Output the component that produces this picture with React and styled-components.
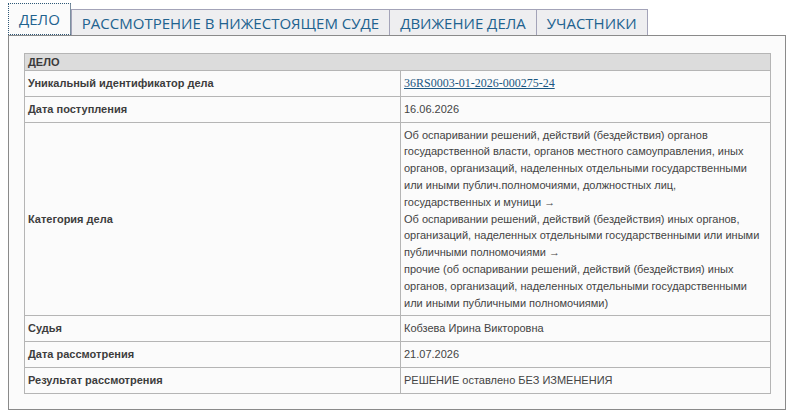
import styled, { createGlobalStyle } from "styled-components";

const GlobalStyle = createGlobalStyle`
  html, body {
    margin: 0;
    padding: 0;
    background: #ffffff;
  }
`;

const Page = styled.div`
  padding: 3px 2px 6px 8px;
`;

const TabBar = styled.ul`
  display: flex;
  align-items: flex-end;
  list-style: none;
  margin: 0;
  padding: 0;
`;

const Tab = styled.li`
  box-sizing: border-box;
  margin-right: ${(p) => (p.$active ? "1px" : "0")};
  margin-left: ${(p) => (p.$active ? "0" : "-1px")};
  padding: ${(p) => (p.$active ? "5px 10px 5px" : "3px 10px 2px")};
  background: ${(p) => (p.$active ? "#fbfbfb" : "#eeeef0")};
  border: 1px solid #a3a3b8;
  border-bottom: none;
  ${(p) => p.$active && "border: 1px dotted #2f5877; border-right-style: solid; border-right-color: #7c8fa0;"}
  font-family: "Open Sans", "Noto Sans", sans-serif;
  font-size: 15px;
  line-height: 20px;
  color: #21628f;
  text-transform: uppercase;
  white-space: nowrap;
  cursor: pointer;

  &:first-child {
    margin-left: 0;
  }
`;

const Panel = styled.div`
  border: 1px solid #8a8a8a;
  background: #fbfbfb;
  padding: 17px 14px 15px 15px;
`;

const Table = styled.table`
  width: 100%;
  border-collapse: collapse;
  font-family: "Liberation Sans", Arial, sans-serif;
  font-size: 11px;
  color: #444;
`;

const HeadCell = styled.th`
  background: #dcdcdc;
  border: 1px solid #b5b5b5;
  text-align: left;
  font-weight: bold;
  color: #3a3a3a;
  padding: 1px 3px;
  line-height: 14px;
`;

const Label = styled.td`
  width: 369px;
  border: 1px solid #b5b5b5;
  padding: 4px 3px;
  line-height: 16.8px;
  font-weight: bold;
  color: #3d3d3d;
  vertical-align: middle;
`;

const Value = styled.td`
  border: 1px solid #b5b5b5;
  padding: 4px 10px 4px 3px;
  line-height: 16.8px;
  color: #444;
`;

const CaseLink = styled.a`
  font-family: "Liberation Serif", "Times New Roman", serif;
  font-size: 12px;
  color: #1b5682;
  text-decoration: underline;
`;

const Line = styled.div``;

const tabs = ["Дело", "Рассмотрение в нижестоящем суде", "Движение дела", "Участники"];

const category = [
  "Об оспаривании решений, действий (бездействия) органов государственной власти, органов местного самоуправления, иных органов, организаций, наделенных отдельными государственными или иными публич.полномочиями, должностных лиц, государственных и муници →",
  "Об оспаривании решений, действий (бездействия) иных органов, организаций, наделенных отдельными государственными или иными публичными полномочиями →",
  "прочие (об оспаривании решений, действий (бездействия) иных органов, организаций, наделенных отдельными государственными или иными публичными полномочиями)",
];

export default function App() {
  return (
    <Page>
      <GlobalStyle />
      <TabBar>
        {tabs.map((t, i) => (
          <Tab key={t} $active={i === 0}>
            {t}
          </Tab>
        ))}
      </TabBar>
      <Panel>
        <Table>
          <thead>
            <tr>
              <HeadCell colSpan={2}>ДЕЛО</HeadCell>
            </tr>
          </thead>
          <tbody>
            <tr>
              <Label>Уникальный идентификатор дела</Label>
              <Value>
                <CaseLink href="#">36RS0003-01-2026-000275-24</CaseLink>
              </Value>
            </tr>
            <tr>
              <Label>Дата поступления</Label>
              <Value>16.06.2026</Value>
            </tr>
            <tr>
              <Label>Категория дела</Label>
              <Value>
                {category.map((c) => (
                  <Line key={c}>{c}</Line>
                ))}
              </Value>
            </tr>
            <tr>
              <Label>Судья</Label>
              <Value>Кобзева Ирина Викторовна</Value>
            </tr>
            <tr>
              <Label>Дата рассмотрения</Label>
              <Value>21.07.2026</Value>
            </tr>
            <tr>
              <Label>Результат рассмотрения</Label>
              <Value>РЕШЕНИЕ оставлено БЕЗ ИЗМЕНЕНИЯ</Value>
            </tr>
          </tbody>
        </Table>
      </Panel>
    </Page>
  );
}
